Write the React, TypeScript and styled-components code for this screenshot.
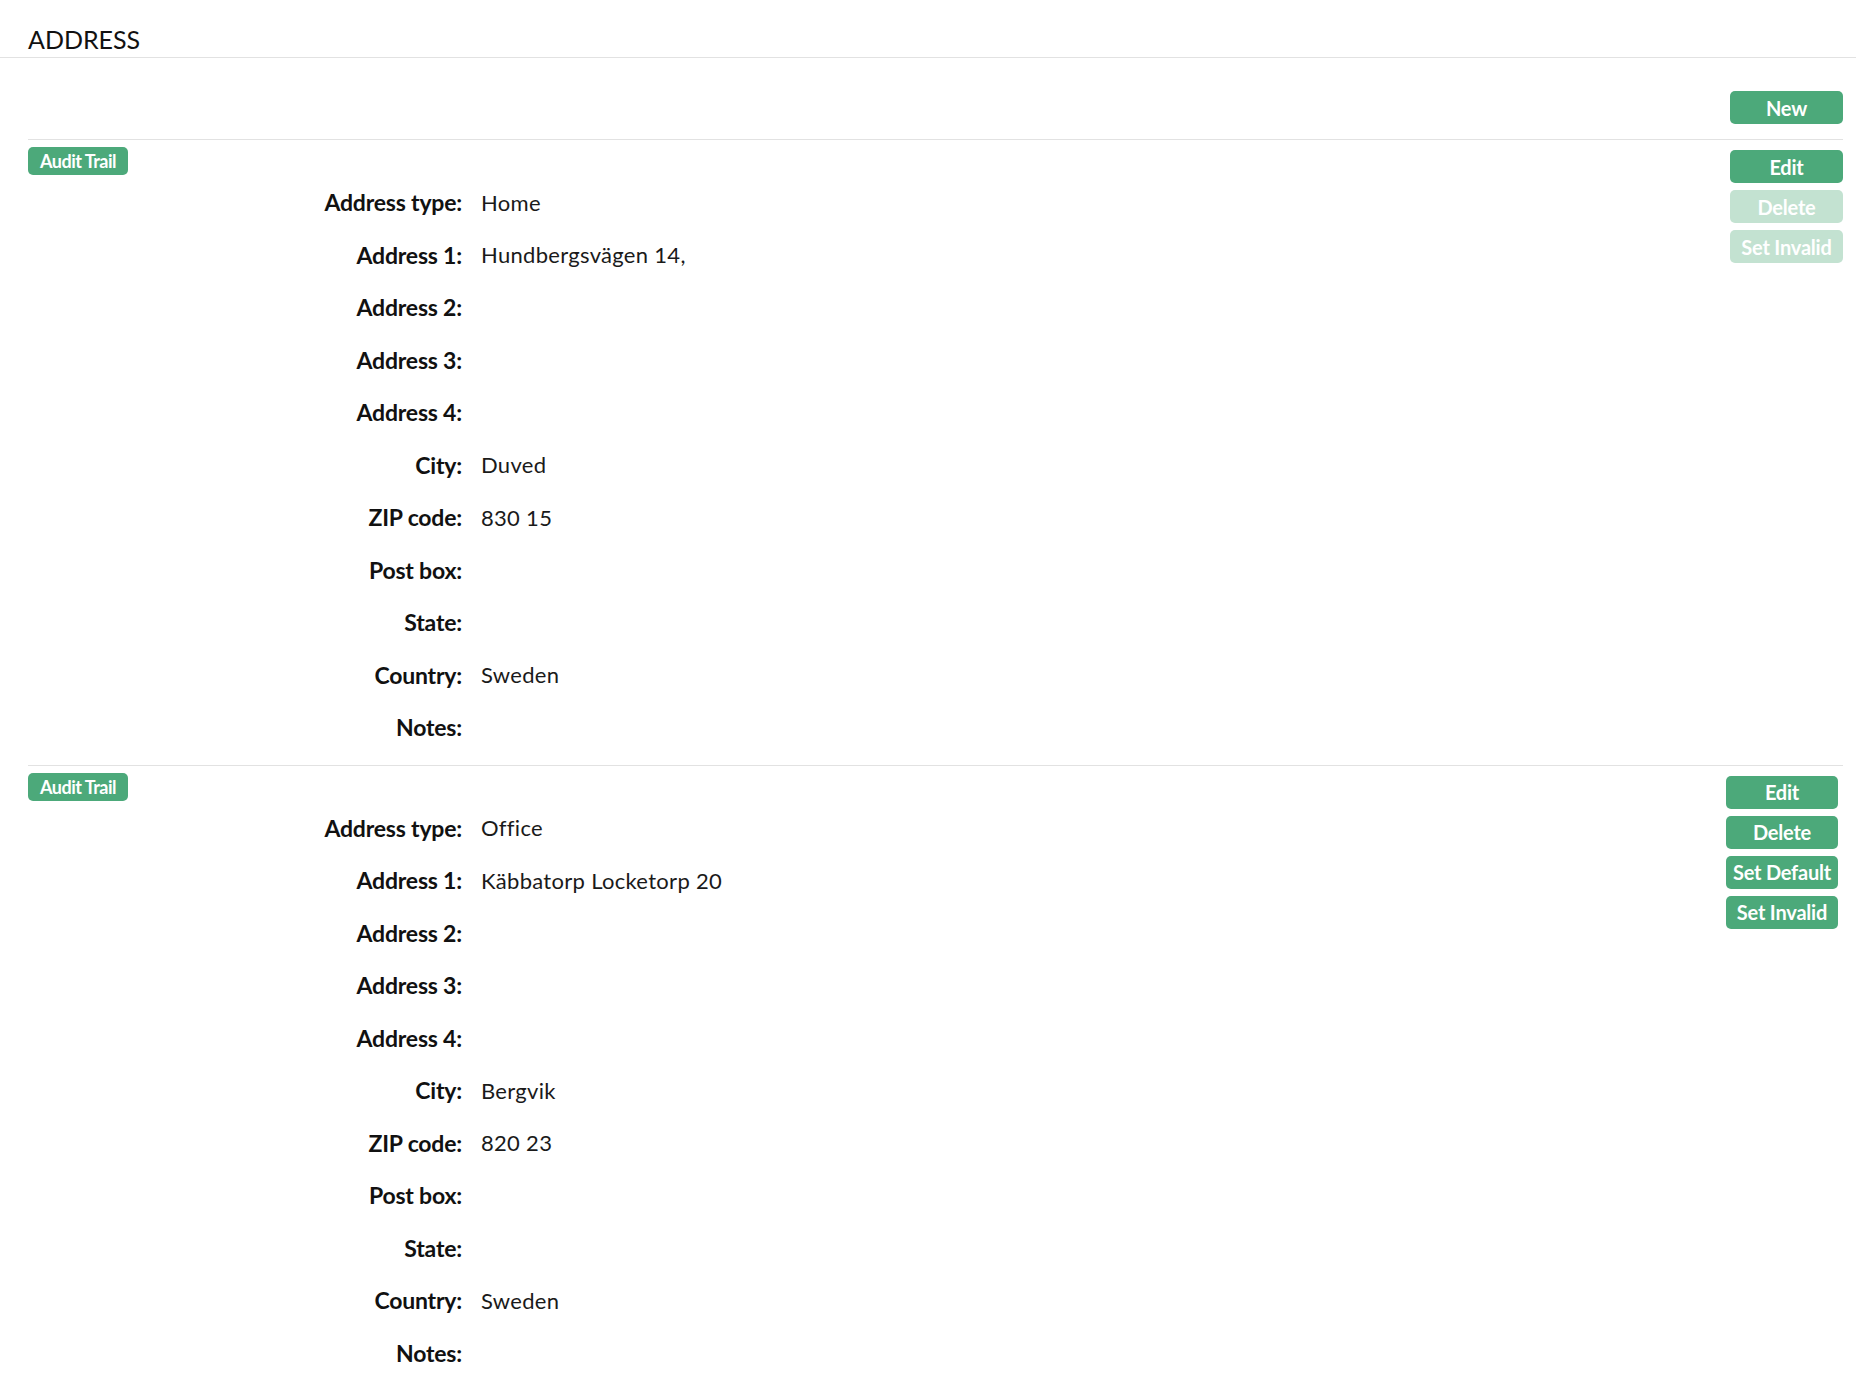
import React from 'react';
import styled, { createGlobalStyle } from 'styled-components';

const GlobalStyle = createGlobalStyle`
  body {
    margin: 0;
    background: #ffffff;
    color: #1a1a1a;
    font-family: Lato, "Liberation Sans", sans-serif;
  }
`;

const PageHeader = styled.div`
  height: 58px;
  box-sizing: border-box;
  border-bottom: 1px solid #e2e2e2;
  padding: 21px 0 0 28px;
`;

const Heading = styled.h1`
  margin: 0;
  font-family: Lato, "Liberation Sans", sans-serif;
  font-weight: 400;
  font-size: 25px;
  line-height: 36px;
  color: #111;
`;

const Content = styled.div`
  padding: 0 13px 0 28px;
`;

const TopBar = styled.div`
  display: flex;
  justify-content: flex-end;
  padding: 33px 0 15px;
  border-bottom: 1px solid #e2e2e2;
`;

const Block = styled.section`
  display: grid;
  grid-template-columns: 1fr auto;
  padding: 7px 0 12px;
  border-bottom: 1px solid #e2e2e2;

  &:last-child {
    border-bottom: none;
  }
`;

const Main = styled.div`
  display: flex;
  flex-direction: column;
  align-items: flex-start;
`;

const Btn = styled.button<{ $disabled?: boolean; $size?: 'sm' }>`
  font-family: Lato, "Liberation Sans", sans-serif;
  font-weight: 700;
  font-size: ${p => (p.$size === 'sm' ? '18px' : '20px')};
  letter-spacing: ${p => (p.$size === 'sm' ? '-0.5px' : '-0.2px')};
  color: #ffffff;
  background: ${p => (p.$disabled ? '#c3e2d1' : '#4ca97a')};
  border: none;
  border-radius: 5px;
  height: ${p => (p.$size === 'sm' ? '28px' : '33px')};
  padding: 0 ${p => (p.$size === 'sm' ? '12px' : '4px')};
  cursor: ${p => (p.$disabled ? 'default' : 'pointer')};
  white-space: nowrap;
`;

const WideBtn = styled(Btn)`
  width: 113px;
`;

const Actions = styled.div<{ $inset?: number }>`
  display: flex;
  flex-direction: column;
  gap: 7px;
  width: ${p => (p.$inset ? 112 : 113)}px;
  padding-top: 3px;
  margin-right: ${p => p.$inset ?? 0}px;

  & > button {
    width: 100%;
  }
`;

const Fields = styled.dl`
  margin: 0;
  display: grid;
  grid-template-columns: 434px 1fr;
  grid-auto-rows: 52.5px;
  column-gap: 19px;
  width: 100%;
`;

const Label = styled.dt`
  font-weight: 700;
  font-size: 23px;
  letter-spacing: -0.2px;
  color: #111;
  display: flex;
  align-items: center;
  justify-content: flex-end;
  padding-top: 2px;
`;

const Value = styled.dd`
  margin: 0;
  font-weight: 400;
  font-size: 22px;
  letter-spacing: 0.3px;
  color: #1a1a1a;
  display: flex;
  align-items: center;
  padding-top: 2px;
`;

type Address = {
  type: string;
  address1: string;
  city: string;
  zip: string;
  country: string;
  isDefault: boolean;
};

const addresses: Address[] = [
  { type: 'Home', address1: 'Hundbergsvägen 14,', city: 'Duved', zip: '830 15', country: 'Sweden', isDefault: true },
  { type: 'Office', address1: 'Käbbatorp Locketorp 20', city: 'Bergvik', zip: '820 23', country: 'Sweden', isDefault: false },
];

const AddressBlock: React.FC<{ a: Address }> = ({ a }) => {
  const rows: [string, string][] = [
    ['Address type', a.type],
    ['Address 1', a.address1],
    ['Address 2', ''],
    ['Address 3', ''],
    ['Address 4', ''],
    ['City', a.city],
    ['ZIP code', a.zip],
    ['Post box', ''],
    ['State', ''],
    ['Country', a.country],
    ['Notes', ''],
  ];

  return (
    <Block>
      <Main>
        <Btn $size="sm">Audit Trail</Btn>
        <Fields>
          {rows.map(([label, value]) => (
            <React.Fragment key={label}>
              <Label>{label}:</Label>
              <Value>{value}</Value>
            </React.Fragment>
          ))}
        </Fields>
      </Main>
      {a.isDefault ? (
        <Actions>
          <Btn>Edit</Btn>
          <Btn $disabled>Delete</Btn>
          <Btn $disabled>Set Invalid</Btn>
        </Actions>
      ) : (
        <Actions $inset={5}>
          <Btn>Edit</Btn>
          <Btn>Delete</Btn>
          <Btn>Set Default</Btn>
          <Btn>Set Invalid</Btn>
        </Actions>
      )}
    </Block>
  );
};

const App: React.FC = () => (
  <>
    <GlobalStyle />
    <PageHeader>
      <Heading>ADDRESS</Heading>
    </PageHeader>
    <Content>
      <TopBar>
        <WideBtn>New</WideBtn>
      </TopBar>
      {addresses.map(a => (
        <AddressBlock key={a.type} a={a} />
      ))}
    </Content>
  </>
);

export default App;
